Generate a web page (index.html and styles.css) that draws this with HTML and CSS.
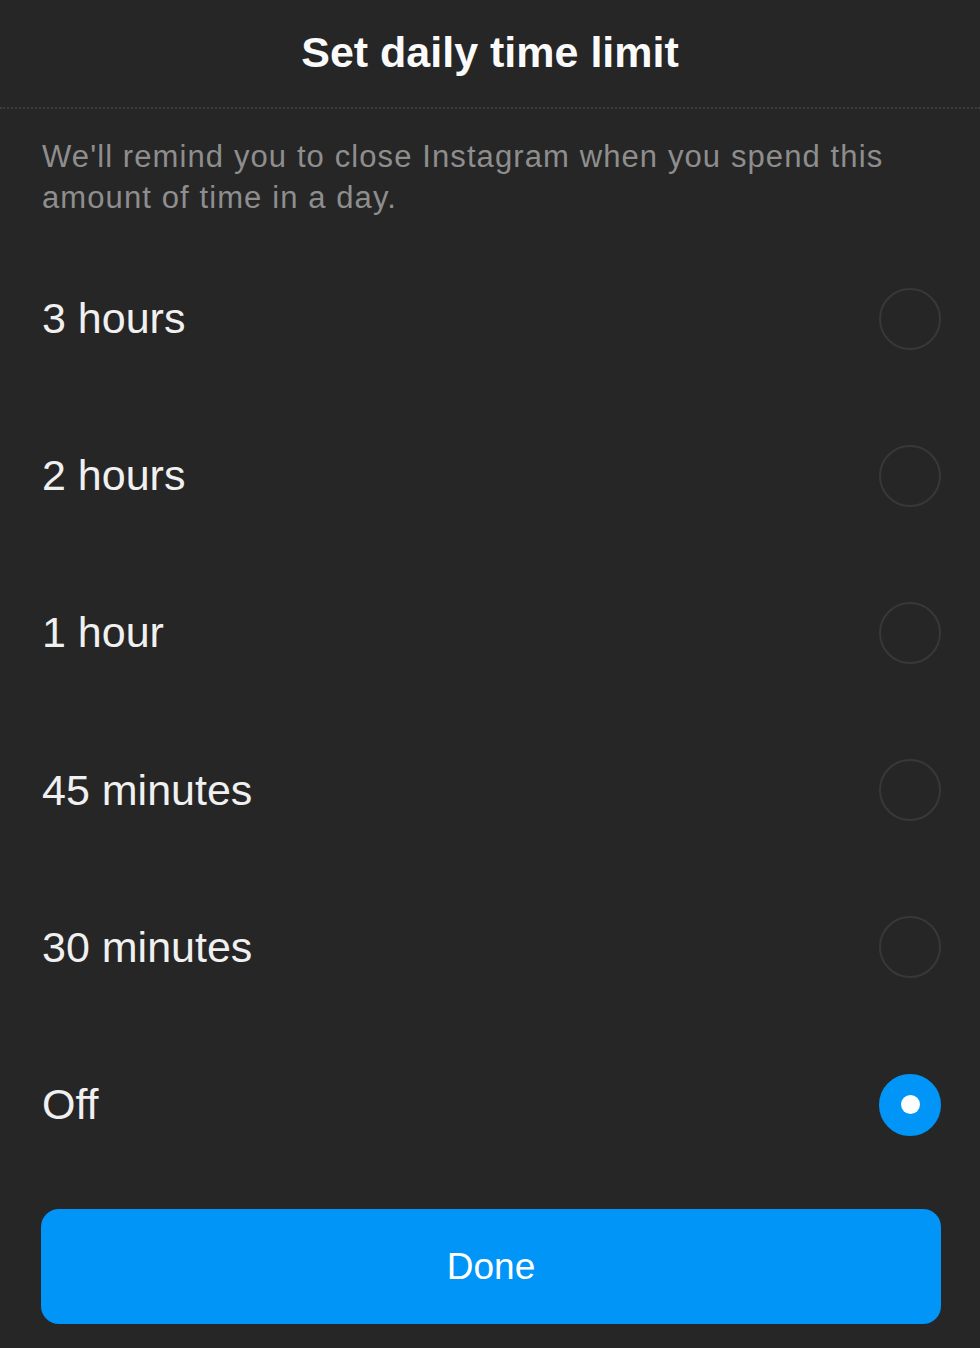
FILE: index.html
```html
<!DOCTYPE html>
<html lang="en">
<head>
    <meta charset="UTF-8">
    <meta name="viewport" content="width=device-width, initial-scale=1.0">
    <title>Set daily time limit</title>
    <link rel="stylesheet" href="styles.css">
</head>
<body>

    <div class="sheet">
        <!-- Cabecera -->
        <div class="header">
            <h1>Set daily time limit</h1>
        </div>

        <p class="intro">We'll remind you to close Instagram when you spend this amount of time in a day.</p>

        <!-- Opciones -->
        <ul class="options">
            <li class="option"><span>3 hours</span><span class="radio"></span></li>
            <li class="option"><span>2 hours</span><span class="radio"></span></li>
            <li class="option"><span>1 hour</span><span class="radio"></span></li>
            <li class="option"><span>45 minutes</span><span class="radio"></span></li>
            <li class="option"><span>30 minutes</span><span class="radio"></span></li>
            <li class="option"><span>Off</span><span class="radio selected"></span></li>
        </ul>

        <button class="done">Done</button>
    </div>

</body>
</html>
```

FILE: styles.css
```css
* {
    margin: 0;
    padding: 0;
    box-sizing: border-box;
}

body {
    font-family: "Liberation Sans", Arial, sans-serif;
    background-color: #262626;
    color: #f5f5f5;
}

.sheet {
    width: 980px;
    height: 1348px;
}

/* Cabecera */
.header {
    height: 109px;
    display: flex;
    align-items: center;
    justify-content: center;
    border-bottom: 2px dotted #3c3c3c;
    padding-bottom: 2px;
}

.header h1 {
    font-size: 43px;
    font-weight: bold;
    color: #fafafa;
}

.intro {
    padding: 27px 60px 0 42px;
    font-size: 31px;
    letter-spacing: 1.1px;
    line-height: 41px;
    color: #8e8e8e;
    height: 131px;
}

/* Lista de opciones */
.options {
    list-style: none;
}

.option {
    height: 157.2px;
    display: flex;
    align-items: center;
    justify-content: space-between;
    padding: 0 39px 0 42px;
    font-size: 43px;
    color: #f0f0f0;
}

.radio {
    width: 62px;
    height: 62px;
    border-radius: 50%;
    border: 2px solid #383838;
    display: flex;
    align-items: center;
    justify-content: center;
}

.radio.selected {
    background: #0095f6;
    border-color: #0095f6;
}

.radio.selected::after {
    content: "";
    width: 19px;
    height: 19px;
    border-radius: 50%;
    background: #fff;
}

/* Botón */
.done {
    display: block;
    margin: 26px 39px 0 41px;
    width: 900px;
    height: 115px;
    border: none;
    border-radius: 18px;
    background: #0095f6;
    color: #fff;
    font-family: "Liberation Sans", Arial, sans-serif;
    font-size: 37px;
    font-weight: normal;
}
```
